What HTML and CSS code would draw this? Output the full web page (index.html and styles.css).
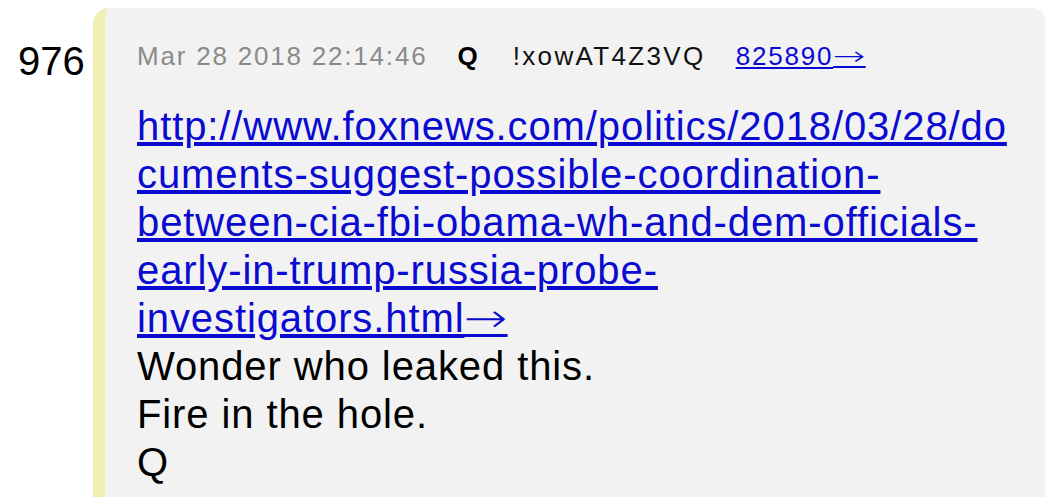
FILE: index.html
```html
<!DOCTYPE html>
<html>
<head>
<meta charset="utf-8">
<link rel="stylesheet" href="styles.css">
</head>
<body>
<div class="post">
  <div class="num">976</div>
  <div class="card">
    <div class="meta">
      <span class="date">Mar 28 2018 22:14:46</span>
      <span class="name">Q</span>
      <span class="trip">!xowAT4Z3VQ</span>
      <a class="ref" href="#">825890<span class="arrow arrow-sm">→</span></a>
    </div>
    <div class="body">
      <a class="link" href="#">http://www.foxnews.com/politics/2018/03/28/do<br>cuments-suggest-possible-coordination-<br>between-cia-fbi-obama-wh-and-dem-officials-<br>early-in-trump-russia-probe-<br>investigators.html<span class="arrow arrow-lg">→</span></a><br>
      Wonder who leaked this.<br>
      Fire in the hole.<br>
      Q
    </div>
  </div>
</div>
</body>
</html>
```

FILE: styles.css
```css
html, body {
  margin: 0;
  padding: 0;
  background: #ffffff;
  font-family: "Liberation Sans", Arial, Helvetica, sans-serif;
}

.post {
  display: flex;
  align-items: flex-start;
  height: 497px;
  overflow: hidden;
}

.num {
  width: 75px;
  padding-left: 18px;
  padding-top: 38px;
  font-size: 40px;
  line-height: 47px;
  color: #000;
}

.card {
  margin-top: 8px;
  width: 952px;
  height: 520px;
  background: #f2f2f2;
  border-left: 12px solid #f1efb4;
  border-radius: 16px 12px 0 0;
  padding-left: 32px;
  box-sizing: border-box;
}

.meta {
  display: flex;
  gap: 30px;
  padding-top: 33px;
  font-size: 26px;
  line-height: 30px;
  letter-spacing: 1.8px;
  white-space: nowrap;
}

.date {
  color: #8a8a8a;
}

.name {
  font-weight: bold;
  color: #000;
  letter-spacing: 0;
  margin-right: 5px;
}

.trip {
  color: #111;
  letter-spacing: 2.35px;
}

.ref {
  color: #0a0ad0;
  text-decoration: underline;
}

.arrow {
  display: inline-block;
  font-family: "DejaVu Sans", sans-serif;
  font-weight: 200;
  letter-spacing: 0;
  line-height: 1;
  text-decoration: underline;
  transform-origin: left center;
}

.arrow-sm {
  transform: scaleX(1.5);
  margin-right: 0.42em;
  text-decoration-thickness: 2px;
}

.arrow-lg {
  transform: scaleX(1.3);
  margin-right: 0.25em;
  text-decoration-thickness: 3px;
}

.body {
  margin-top: 31px;
  font-size: 40px;
  line-height: 48px;
  letter-spacing: 0.9px;
  color: #000;
  white-space: nowrap;
}

.link {
  color: #0a0ad0;
  text-decoration: underline;
}
```
